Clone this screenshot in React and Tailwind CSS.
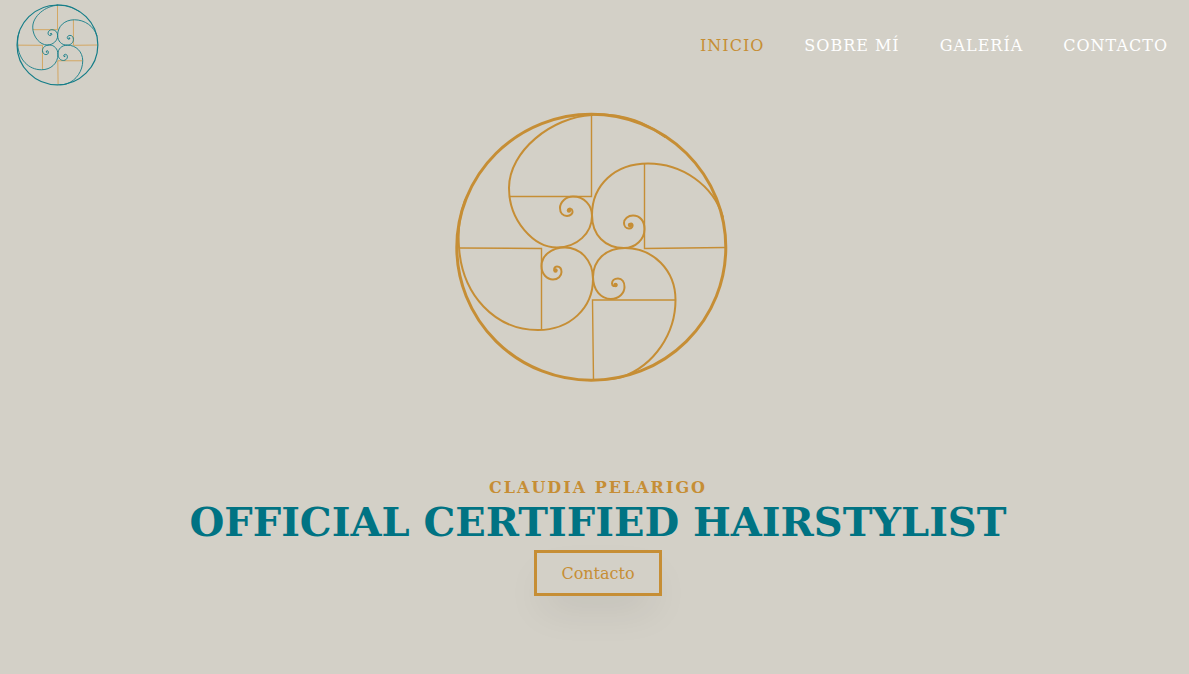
const arms = [
  'M142 10C102 12 59 46 59 83C59 116 84 142.500 107 142.500C127 142.500 142 128 142 111C142 100 134 91.5 123 91.5C116 91.5 110 97 110 103C110 108 113 111 117 111C121 111 123 108 122.5 106C122 103 119 103 118 105',
  'M273 112C263 80 232 58.5 198 58.5C165 58.5 142 80 142 110C142 130 155 143 174 143C186 143 194.5 134 194.5 124C194.5 116 190 110.5 183 110.5C178 110.5 174 114 174 118C174 121 176 123.5 179 123.5C182 123.5 183 121 182.5 119.5C182 118 180 118 180 120',
  'M15 95C9 112 8 130 9 142C12 190 45 225 88 225C120 225 143 203 143 174C143 155 130 142.5 115 142.5C101 142.5 91.5 151 91.5 161C91.5 169 97 174.5 103 174.5C108 174.5 111.5 171 111.5 167C111.5 164 110 161.5 107 161.5C104.5 161.5 103.5 164 105 166',
  'M150 275C158 275 165 274 172 272C205 260 225.5 228 225.5 195C225.5 165 203 143 175 143C155 143 143 156 143 172C143 185 151 194 161 194C169 194 174.5 188 174.5 182C174.5 177 172 173.5 168 173.5C164 173.5 162 176 162 178.5C162 181 165 182 166.5 180',
  'M140 9.5C177 8 197 19 215 32',
];

const eyes = [
  [119, 105.5],
  [180, 120],
  [105.5, 165.5],
  [165.5, 180],
];

function Spiral({ className, viewBox, curve, line, ring, stroke, thin }) {
  return (
    <svg className={className} viewBox={viewBox} fill="none" role="img" aria-label="Claudia Pelarigo">
      <path
        d="M59 91.5H141.5V10M194.5 58.5V143.5L276 142.5M9 143L91.5 143.5V224M225 195H142.5L143.5 275"
        stroke={line}
        strokeWidth={thin}
      />
      <ellipse cx="141.3" cy="142.3" rx="134.5" ry="133" stroke={curve} strokeWidth={ring} />
      {arms.map((d) => (
        <path key={d} d={d} stroke={curve} strokeWidth={stroke} strokeLinecap="round" />
      ))}
      {eyes.map(([x, y]) => (
        <circle key={x} cx={x} cy={y} r="2.2" fill={curve} />
      ))}
    </svg>
  );
}

const links = [
  ['INICIO', '#inicio'],
  ['SOBRE MÍ', '#sobre-mi'],
  ['GALERÍA', '#galeria'],
  ['CONTACTO', '#contacto'],
];

export default function App() {
  return (
    <div className="min-h-screen bg-[#d3d0c7] font-['DejaVu_Serif',serif] text-[#c68e35]">
      <header className="flex h-[90px] items-center justify-between pr-[21px] pl-4">
        <a href="#inicio">
          <Spiral
            className="h-[82px] w-[83px]"
            viewBox="4 6 275 273"
            curve="#147d88"
            line="#d39a45"
            ring={4}
            stroke={3}
            thin={2.6}
          />
        </a>
        <nav className="flex gap-10 pt-0.5 tracking-[1px]">
          {links.map(([label, href], i) => (
            <a key={href} href={href} className={i === 0 ? 'text-[#c68e35]' : 'text-white'}>
              {label}
            </a>
          ))}
        </nav>
      </header>
      <main id="inicio" className="flex flex-col items-center pt-[21px] pl-[7px]">
        <Spiral
          className="h-[273px] w-[290px]"
          viewBox="3 6 290 273"
          curve="#c68e35"
          line="#c68e35"
          ring={3}
          stroke={2}
          thin={1.4}
        />
        <p className="mt-[92px] font-bold tracking-[2px]">CLAUDIA PELARIGO</p>
        <h1 className="text-center text-[40px] leading-[44px] font-bold text-[#007383]">
          OFFICIAL CERTIFIED HAIRSTYLIST
        </h1>
        <a
          href="#contacto"
          className="mt-[6px] border-3 border-[#c68e35] px-6 pt-[9px] pb-[7px] shadow-[0_20px_40px_-10px_rgba(0,0,0,0.1)]"
        >
          Contacto
        </a>
      </main>
    </div>
  );
}
